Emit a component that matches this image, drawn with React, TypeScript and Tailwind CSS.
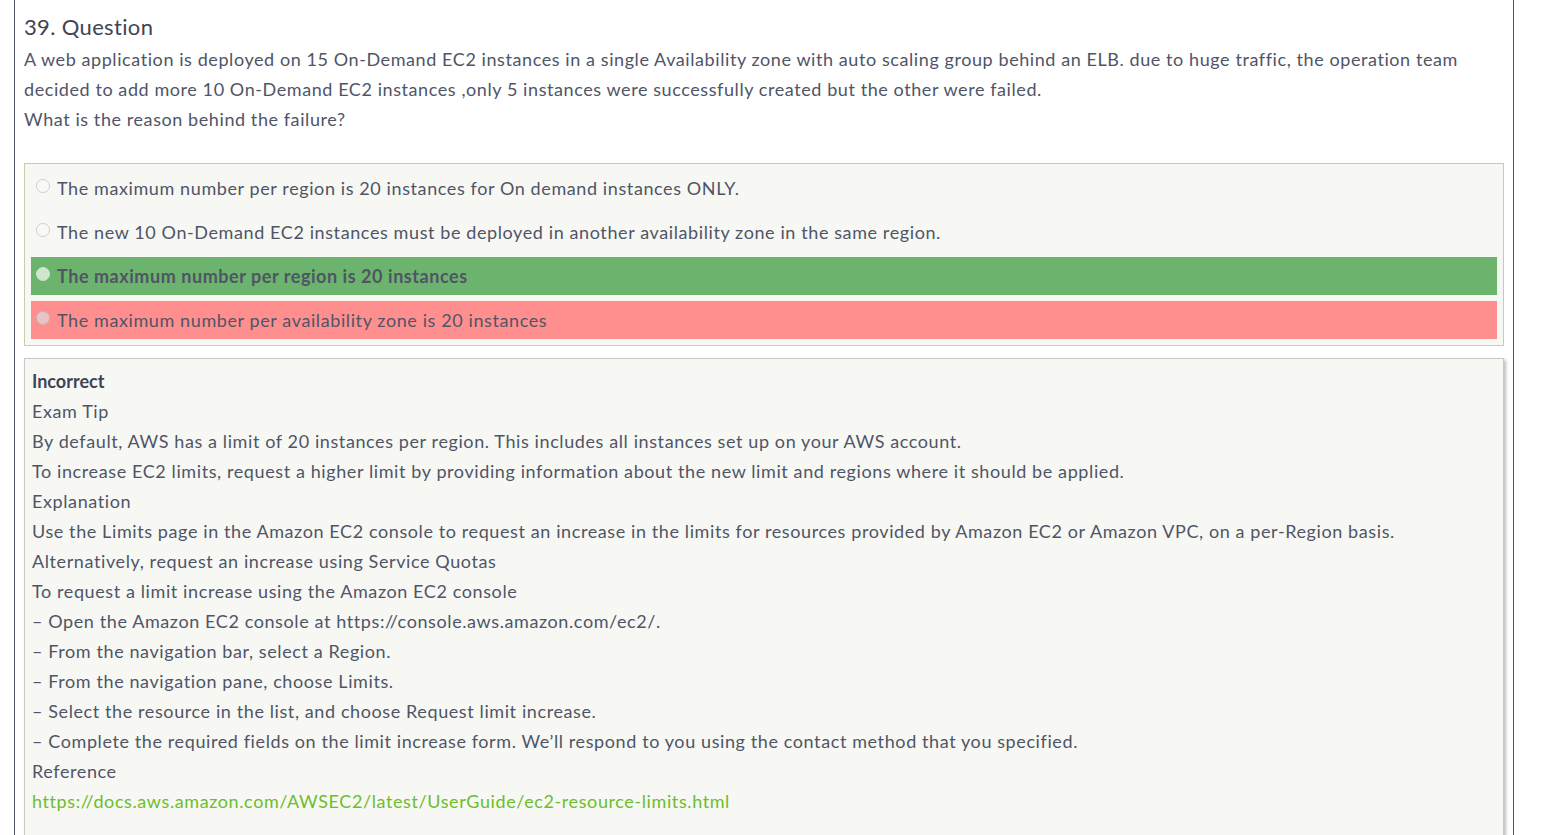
import React from 'react';

const options = [
  { text: 'The maximum number per region is 20 instances for On demand instances ONLY.', state: 'none' },
  { text: 'The new 10 On-Demand EC2 instances must be deployed in another availability zone in the same region.', state: 'none' },
  { text: 'The maximum number per region is 20 instances', state: 'correct' },
  { text: 'The maximum number per availability zone is 20 instances', state: 'wrong' },
];

const lines = [
  'Exam Tip',
  'By default, AWS has a limit of 20 instances per region. This includes all instances set up on your AWS account.',
  'To increase EC2 limits, request a higher limit by providing information about the new limit and regions where it should be applied.',
  'Explanation',
  'Use the Limits page in the Amazon EC2 console to request an increase in the limits for resources provided by Amazon EC2 or Amazon VPC, on a per-Region basis.',
  'Alternatively, request an increase using Service Quotas',
  'To request a limit increase using the Amazon EC2 console',
  '– Open the Amazon EC2 console at https://console.aws.amazon.com/ec2/.',
  '– From the navigation bar, select a Region.',
  '– From the navigation pane, choose Limits.',
  '– Select the resource in the list, and choose Request limit increase.',
  '– Complete the required fields on the limit increase form. We’ll respond to you using the contact method that you specified.',
  'Reference',
];

const Radio: React.FC<{ state: string }> = ({ state }) => {
  const fill = state === 'correct' ? 'bg-[#cfe6cf] border-[#cfe6cf]' : state === 'wrong' ? 'bg-[#e8c4c8] border-[#c9b4b8]' : 'bg-[#f9f9f9] border-[#cfcfcf]';
  return <span className={`inline-block w-[14px] h-[14px] rounded-full border ${fill} mr-[7px] -mt-[4px] shrink-0`} />;
};

const App: React.FC = () => {
  return (
    <div className="min-h-[835px] bg-white text-[#4f5566]" style={{ fontFamily: 'Lato, "Open Sans", sans-serif' }}>
      <div className="ml-[14px] w-[1500px] min-h-[835px] border-l border-r border-[#4b5263] px-[9px] pt-[11px]">
        <h2 className="text-[22px] leading-[32px] font-normal tracking-[0.35px] text-[#3f4454]">39. Question</h2>
        <div className="text-[18px] leading-[30px] mt-[1px] tracking-[0.58px]">
          <p>
            A web application is deployed on 15 On-Demand EC2 instances in a single Availability zone with auto scaling group behind an ELB. due to huge traffic, the operation team decided to add more 10 On-Demand EC2 instances ,only 5 instances were successfully created but the other were failed.
          </p>
          <p>What is the reason behind the failure?</p>
        </div>

        <div className="mt-[29px] w-[1480px] border border-[#c6d0a8] bg-[#f7f8f4] px-[6px] pt-[5px] pb-[6px] flex flex-col gap-[6px] tracking-[0.6px]">
          {options.map((o, i) => (
            <div
              key={i}
              className={`h-[38px] flex items-center pl-[5px] text-[18px] ${
                o.state === 'correct' ? 'bg-[#6cb36d] font-bold tracking-[0.55px]' : o.state === 'wrong' ? 'bg-[#ff8f8f]' : ''
              }`}
            >
              <Radio state={o.state} />
              <span>{o.text}</span>
            </div>
          ))}
        </div>

        <div className="mt-[12px] w-[1480px] min-h-[480px] border border-[#c8c8c8] bg-[#f7f8f4] shadow-[2px_2px_3px_rgba(0,0,0,0.25)] px-[7px] pt-[7px] text-[18px] leading-[30px] tracking-[0.6px]">
          <div className="font-bold tracking-[0px] text-[#3f4454]">Incorrect</div>
          {lines.map((l, i) => (
            <div key={i}>{l}</div>
          ))}
          <a className="text-[#6dbd2c]" href="#">
            https://docs.aws.amazon.com/AWSEC2/latest/UserGuide/ec2-resource-limits.html
          </a>
        </div>
      </div>
    </div>
  );
};

export default App;
